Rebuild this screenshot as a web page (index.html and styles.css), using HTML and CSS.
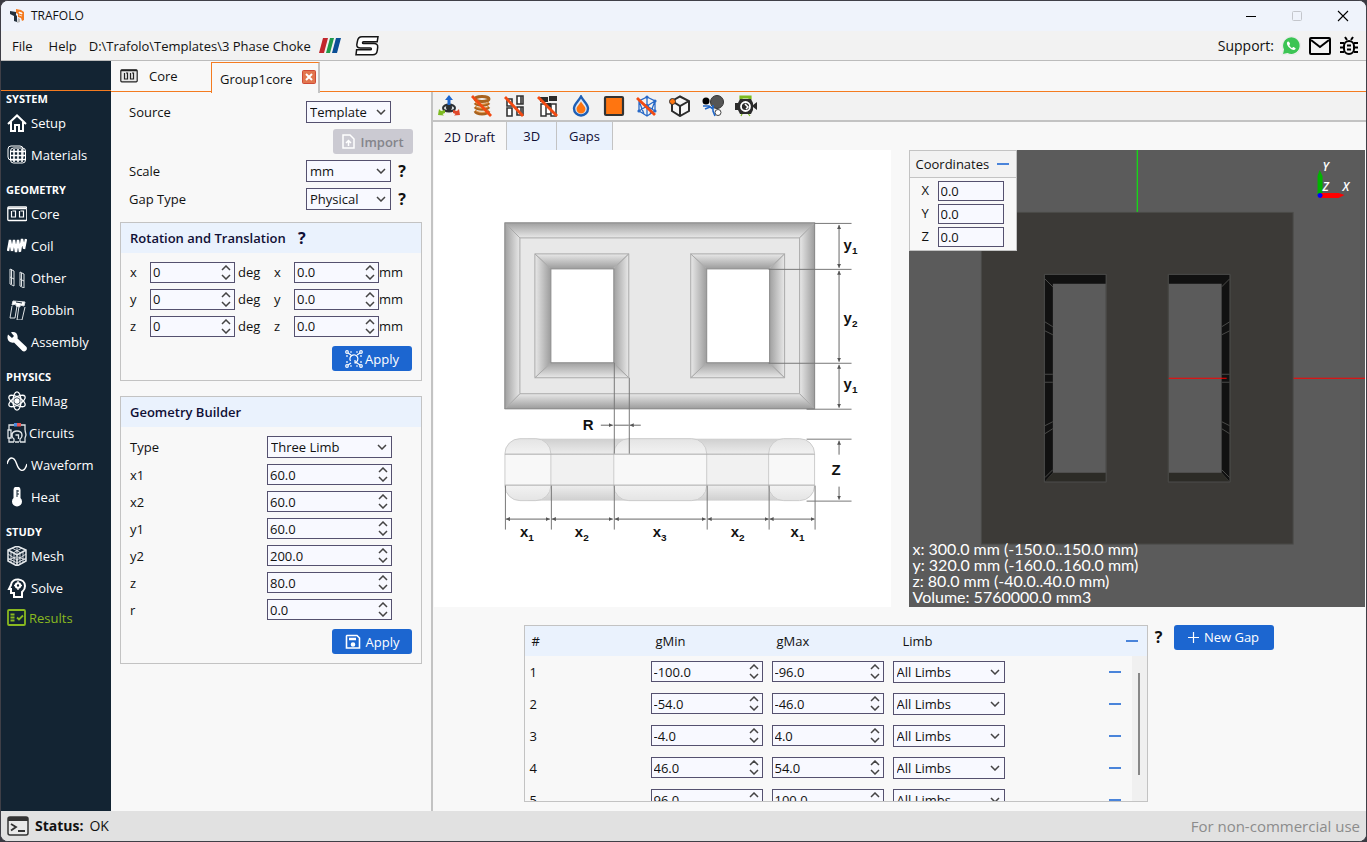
FILE: index.html
```html
<!DOCTYPE html>
<html lang="en">
<head>
    <meta charset="UTF-8">
    <meta name="viewport" content="width=device-width, initial-scale=1.0">
    <title>TRAFOLO</title>
    <link rel="stylesheet" href="styles.css">
</head>
<body>
<div class="window">
    <header class="titlebar">
        <svg class="logo" width="16" height="16" viewBox="0 0 16 16"><path d="M1 3l6 1v3l1 1v6l-3-1V8L1 6z" fill="#23303c"/><path d="M7 1l5 1 3 2v8l-2 1-1-3-3-1V6L7 5z" fill="#f47b20"/><path d="M10 4l3 1v1l-3-1zM10 7l3 1" fill="#fff" stroke="#fff" stroke-width=".7"/><path d="M9 10l2 1v3l-3 1z" fill="#bbb"/></svg>
        <span class="title">TRAFOLO</span>
        <div class="win-buttons">
            <button aria-label="Minimize"><svg width="12" height="12"><path d="M1 6.500h10" stroke="#000"/></svg></button>
            <button aria-label="Maximize" disabled><svg width="12" height="12"><rect x="1.500" y="1.500" width="9" height="9" rx="1" fill="none" stroke="#c4c6cc"/></svg></button>
            <button aria-label="Close"><svg width="12" height="12"><path d="M1 1l10 10M11 1L1 11" stroke="#000" stroke-width="1.100"/></svg></button>
        </div>
    </header>

    <nav class="menubar">
        <button class="menu">File</button>
        <button class="menu">Help</button>
        <span class="path">D:\Trafolo\Templates\3 Phase Choke</span>
        <svg class="app-icon" width="22" height="16" viewBox="0 0 22 16"><path d="M4 0h5L5 15H0z" fill="#c1272d"/><path d="M11 0h4l-4 15H7z" fill="#1f9a4a"/><path d="M17 0h5l-4 15h-5z" fill="#0b4f96"/></svg>
        <svg class="app-icon solver" width="24" height="20" viewBox="0 0 24 20"><path d="M7 .8h16l-.8 5H8.500q-1 0-1 .9t1 .9H19q4 0 3.700 3.500l-.4 3.200q-.6 4.500-4.500 4.500H1l.6-5h13.600q1.200 0 1.200-.9t-1-.9H5.500q-4 0-3.700-3.500l.6-3.200Q3 .8 7 .8z" fill="#fff" stroke="#151515" stroke-width="1.500"/></svg>
        <div class="support">
            <span>Support:</span>
            <a href="#whatsapp" aria-label="WhatsApp"><svg width="20" height="20" viewBox="0 0 20 20"><path d="M1 19l1.400-5A9 9 0 1 1 6 17.700z" fill="#fff" stroke="#ddd" stroke-width=".6"/><path d="M2 18l1-4.500A8.300 8.300 0 1 1 6.500 17z" fill="#3cc454"/><path d="M7 5.500c-2 1-1 4 1.500 6.300s5 3 6 1.200c.5-1-.3-1.200-1.500-1.800s-1.300.6-1.900.7-2.700-2-2.700-2.700.9-.9.600-1.700S7.800 5.100 7 5.500z" fill="#fff"/></svg></a>
            <a href="#mail" aria-label="Mail"><svg width="24" height="20" viewBox="0 0 24 20"><rect x="2" y="2" width="20" height="16" rx="1" fill="none" stroke="#000" stroke-width="2"/><path d="M3 4l9 7 9-7" fill="none" stroke="#000" stroke-width="2"/></svg></a>
            <a href="#bug" aria-label="Report a bug"><svg width="20" height="20" viewBox="0 0 20 20" fill="none" stroke="#000" stroke-width="2"><rect x="5" y="5" width="10" height="13" rx="5"/><path d="M8 9.500h4M8 13.500h4M6 1l2 3M14 1l-2 3M1 7h4M1 11.500h4M1 16h4M15 7h4M15 11.500h4M15 16h4"/></svg></a>
        </div>
    </nav>

    <div class="main">
        <aside class="sidebar">
            <div class="sidebar-top"></div>
            <h2>System</h2>
            <a href="#setup"><svg viewBox="0 0 20 20" fill="none" stroke="#fff" stroke-width="2"><path d="M1 11l9-8.500L19 11M4 9v9h4v-6h4v6h4V9"/></svg>Setup</a>
            <a href="#materials"><svg viewBox="0 0 20 20" fill="none" stroke="#fff"><rect x="1" y="1" width="15" height="14" rx="3"/><rect x="3.500" y="3" width="15" height="15" rx="3"/><path d="M4 6.500h14M4 10.500h14M4 14.500h14M7 4v13M11 4v13M15 4v13" stroke-width="1.600"/></svg>Materials</a>
            <h2>Geometry</h2>
            <a href="#core"><svg viewBox="0 0 20 20" fill="none" stroke="#fff"><rect x=".8" y="3" width="19" height="13.500" rx="1" stroke-width="1.300"/><path d="M1 4.500h18" stroke-width="1.500"/><path d="M4.500 7v6h4V7h-3M12.500 7v6h4V7h-3" stroke-width="1.200"/></svg>Core</a>
            <a href="#coil"><svg viewBox="0 0 20 20" fill="none" stroke="#fff" stroke-width="2.400"><path d="M1 15L3 4l2 11M5 15L7 4l2 12M9 16l2-12 2 12M13 15l2-12 2 9M17 13l2-10"/></svg>Coil</a>
            <a href="#other"><svg viewBox="0 0 20 20" fill="none" stroke="#dfe3e6"><path d="M3 1l4 2v15l-4-2zM7 11L3 9M13 4l4 2v14l-4-2zM17 13l-4-2M4.500 1v15M14.500 5v13"/></svg>Other</a>
            <a href="#bobbin"><svg viewBox="0 0 20 20" fill="none" stroke="#dfe3e6"><path d="M5 6L3 18h5l2-12M12 6l-2 14h5l3-13"/><path d="M6 1l12 1-1 4-4-1v2l-4-1V4L5 5z" fill="#fff"/><path d="M9 2l6 1" stroke="#132433"/></svg>Bobbin</a>
            <a href="#assembly"><svg viewBox="0 0 20 20" fill="#fff"><path d="M1 2.500l4 3.500 2-2L4 .5C8-1 11.500 2 10.500 6.500l9 8.500c1.500 2.500-1.500 5.500-4 4L7 10.500C3 11.500-1 8 1 2.500z"/></svg>Assembly</a>
            <h2>Physics</h2>
            <a href="#elmag"><svg viewBox="0 0 20 20" fill="none" stroke="#fff" stroke-width="1.300"><ellipse cx="10" cy="10" rx="4" ry="9.200"/><ellipse cx="10" cy="10" rx="4" ry="9.200" transform="rotate(60 10 10)"/><ellipse cx="10" cy="10" rx="4" ry="9.200" transform="rotate(120 10 10)"/><circle cx="10" cy="10" r="2" fill="#fff"/></svg>ElMag</a>
            <a href="#circuits" class="tight"><svg viewBox="0 0 20 20" fill="none" stroke="#dfe3e6" stroke-width="1.300"><path d="M7 2H2v5M13 2h5v5M1 7h3v8H1zM2 15v4h5M13 19h5v-4l1-3-1-5M7 19v-3c-3-2-3-8 3-8s6 6 3 8v3M8 19h4M8.500 12h3v4"/><rect x="7" y="0" width="3" height="3.500" fill="#4a8be0" stroke="none"/><rect x="10" y="0" width="4" height="3.500" fill="#e55353" stroke="none"/></svg>Circuits</a>
            <a href="#waveform"><svg viewBox="0 0 20 20" fill="none" stroke="#fff" stroke-width="1.400"><path d="M0 9C2 1 7 1 9.500 8.500S17 19 20 9"/></svg>Waveform</a>
            <a href="#heat"><svg viewBox="0 0 20 20"><path d="M6.500 3a3.500 3.500 0 0 1 7 0v8a5 5 0 1 1-7 0z" fill="#fff"/><path d="M10 3v7M10 4h2M10 7h2" stroke="#132433"/></svg>Heat</a>
            <h2>Study</h2>
            <a href="#mesh"><svg viewBox="0 0 20 20" fill="none" stroke="#e6e9ec" stroke-width="1.500"><path d="M10 0l9 4v11l-9 5-9-5V4zM1 4l9 5 9-5M10 9v11"/><path d="M5 2l9 5M15 2L6 7M10 0v9M4 6v11M7 8v10M1 8l9 6M1 12l9 5M1 14l8-3M13 8v10M16 6v11M19 8l-9 6M19 12l-9 5M19 14l-8-3" stroke-width=".9"/></svg>Mesh</a>
            <a href="#solve"><svg viewBox="0 0 20 20" fill="none" stroke="#fff" stroke-width="2"><path d="M7 19v-4H4v-4H2l2-4c1-8 14-7 14 1 0 4-2 5-3 6v5z"/><circle cx="11" cy="7.500" r="2.200"/><path d="M11 3v2M11 10v2M7 7.500h2M13 7.500h2" stroke-width="1.300"/></svg>Solve</a>
            <a href="#results" class="tight results"><svg viewBox="0 0 20 20" fill="none" stroke="#8ab920" stroke-width="1.800"><rect x="1" y="2" width="17" height="15" rx="1"/><path d="M3.500 6.500h4M3.500 9.500h4M3.500 12.500h4M10 9.500l2 2 4-4"/></svg>Results</a>
        </aside>

        <div class="workspace">
            <div class="doc-tabs">
                <button class="doc-tab"><svg width="18" height="14" viewBox="0 0 18 14" fill="none" stroke="#222"><rect x=".8" y=".8" width="16.400" height="12" rx="1" fill="#e8e8e8" stroke-width="1.200"/><path d="M1 1.500h16" stroke-width="1.500"/><path d="M4.500 4v6h3V4H6M10.500 4v6h3V4H12" stroke-width="1.200"/></svg>Core</button>
                <div class="doc-tab active">Group1core <button class="close-tab" aria-label="Close tab"><svg width="14" height="14"><rect x=".5" y=".5" width="13" height="13" rx="1" fill="#e2764e" stroke="#cf4a36"/><path d="M4 4l6 6M10 4l-6 6" stroke="#fff" stroke-width="2"/></svg></button></div>
            </div>

            <div class="content">
                <form class="settings">
                    <div class="row">
                        <label for="source">Source</label>
                        <select id="source"><option>Template</option></select>
                    </div>
                    <div class="import-row">
                        <button type="button" class="btn import" disabled><svg width="14" height="16" viewBox="0 0 14 16" fill="none" stroke="#fff" stroke-width="1.500"><path d="M1 1h7l4 4v9H1zM6.500 12V7M4 9l2.500-2.500L9 9"/></svg>Import</button>
                    </div>
                    <div class="row">
                        <label for="scale">Scale</label>
                        <select id="scale"><option>mm</option></select>
                        <button type="button" class="help">?</button>
                    </div>
                    <div class="row">
                        <label for="gap-type">Gap Type</label>
                        <select id="gap-type"><option>Physical</option></select>
                        <button type="button" class="help">?</button>
                    </div>

                    <section class="panel">
                        <h3>Rotation and Translation <button type="button" class="help">?</button></h3>
                        <div class="transform-grid">
                            <label for="rx">x</label><input type="number" id="rx" value="0"><span>deg</span>
                            <label for="tx">x</label><input type="number" id="tx" value="0.0"><span>mm</span>
                            <label for="ry">y</label><input type="number" id="ry" value="0"><span>deg</span>
                            <label for="ty">y</label><input type="number" id="ty" value="0.0"><span>mm</span>
                            <label for="rz">z</label><input type="number" id="rz" value="0"><span>deg</span>
                            <label for="tz">z</label><input type="number" id="tz" value="0.0"><span>mm</span>
                        </div>
                        <div class="panel-actions">
                            <button type="button" class="btn"><svg width="18" height="18" viewBox="0 0 18 18" fill="none" stroke="#fff" stroke-width="1.200"><path d="M3 3l3 2M15 3l-3 2M3 15l3-2M15 15l-3-2M5 2h2M11 2h2M5 16h2M11 16h2M2 5v2M16 5v2M2 11v2M16 11v2M5.500 11a4 4 0 1 1 5 1.500M10 10v3h3"/><circle cx="2" cy="2" r="1.300"/><circle cx="16" cy="2" r="1.300"/><circle cx="2" cy="16" r="1.300"/><circle cx="16" cy="16" r="1.300"/></svg>Apply</button>
                        </div>
                    </section>

                    <section class="panel">
                        <h3>Geometry Builder</h3>
                        <div class="builder-grid">
                            <label for="type">Type</label><select id="type"><option>Three Limb</option></select>
                            <label for="x1">x1</label><input type="number" id="x1" value="60.0">
                            <label for="x2">x2</label><input type="number" id="x2" value="60.0">
                            <label for="y1">y1</label><input type="number" id="y1" value="60.0">
                            <label for="y2">y2</label><input type="number" id="y2" value="200.0">
                            <label for="z">z</label><input type="number" id="z" value="80.0">
                            <label for="r">r</label><input type="number" id="r" value="0.0">
                        </div>
                        <div class="panel-actions">
                            <button type="button" class="btn save"><svg width="16" height="16" viewBox="0 0 16 16" fill="none" stroke="#fff" stroke-width="1.600"><path d="M2 1.500h10l2.500 2.500v10H1.500V2z"/><path d="M4 5h7" stroke-width="2.500"/><circle cx="8" cy="10.500" r="1.500" fill="#fff"/></svg>Apply</button>
                        </div>
                    </section>
                </form>

                <div class="view-pane">
                    <div class="toolbar">
                        <button aria-label="Orbit"><svg viewBox="0 0 22 22"><ellipse cx="11" cy="13" rx="7" ry="4.500" fill="#2b2f33"/><ellipse cx="11" cy="13" rx="5" ry="2" fill="#dfe3e6"/><circle cx="11" cy="12.500" r="3" fill="#2b2f33"/><path d="M11 0l4 5h-2.500v5h-3V5H7z" fill="#1f66cc"/><path d="M0 20l1-6 2 2L7 15v3l-2.500 1L6 20.500z" fill="#7dbb21"/><path d="M22 20l-1-6-2 2L15 15v3l2.500 1-1.500 1.500z" fill="#e0492b"/></svg></button>
                        <button aria-label="Toggle coils"><svg viewBox="0 0 22 22"><g fill="none" stroke="#a9631f" stroke-width="3"><ellipse cx="11" cy="4" rx="7" ry="2.500"/><path d="M4 8c2 3 12 3 14 0M4 12c2 3 12 3 14 0M4 16c2 4 12 4 14 0"/></g><path d="M4 7c2 3 12 3 14 0M4 11c2 3 12 3 14 0M4 15c2 3 12 3 14 0" fill="none" stroke="#ee9a45"/><path d="M1 1l19 20" stroke="#f24a12" stroke-width="2.800"/></svg></button>
                        <button aria-label="Toggle bars"><svg viewBox="0 0 22 22"><g fill="#fff" stroke="#333" stroke-width="1.600"><path d="M3 4h5v7H3zM3 13h5v8H3zM13 1h6v8h-6zM13 12h6v8h-6zM17 1v8M17 12v8"/></g><path d="M1 2l18 19" stroke="#f24a12" stroke-width="2.800"/></svg></button>
                        <button aria-label="Toggle bobbin"><svg viewBox="0 0 22 22"><g fill="#fff" stroke="#333" stroke-width="1.500"><path d="M4 9h5v12H4zM14 9h5v12h-5zM9 9h5v10H9z"/></g><path d="M3 2h8v5H3zM12 1h8v5h-8zM9 8h5v4H9z" fill="#2b2b2b"/><path d="M1 2l19 19" stroke="#f24a12" stroke-width="2.800"/></svg></button>
                        <button aria-label="Opacity"><svg viewBox="0 0 22 22"><path d="M11 1.500C8 7 4 9 4 13.500a7 7 0 0 0 14 0C18 9 14 7 11 1.500z" fill="#dfe8f4" stroke="#1f5fb5" stroke-width="2.400"/><path d="M11 6.500c-2 3.500-4.500 5-4.500 7.500a4.500 4.500 0 0 0 9 0c0-2.500-2.500-4-4.500-7.500z" fill="#ff7510"/></svg></button>
                        <button aria-label="Colour"><svg viewBox="0 0 22 22"><rect x="2" y="2" width="18" height="18" rx="1" fill="#ff7510" stroke="#333" stroke-width="2.200"/></svg></button>
                        <button aria-label="Toggle mesh"><svg viewBox="0 0 22 22"><path d="M11 2l8 4v10l-8 5-8-5V6zM3 6l8 5 8-5M11 2v19M3 16l8-5 8 5M3 6l5 13M19 6l-5 13" fill="none" stroke="#2869c7" stroke-width="1.300"/><g fill="#2869c7"><circle cx="11" cy="2" r="1.600"/><circle cx="19" cy="6" r="1.600"/><circle cx="19" cy="16" r="1.600"/><circle cx="3" cy="16" r="1.600"/><circle cx="11" cy="11" r="2"/></g><path d="M1 3l18 17" stroke="#f24a12" stroke-width="2.800"/></svg></button>
                        <button aria-label="Vertex"><svg viewBox="0 0 22 22"><path d="M11 1.500l9 4.500v10l-9 5-8-5V6zM3 6l8 5 9-5M11 11v10" fill="#f6f6f6" stroke="#2b2b2b" stroke-width="2"/><circle cx="3.500" cy="6.500" r="3" fill="#ff7510" stroke="#333"/></svg></button>
                        <button aria-label="Lighting"><svg viewBox="0 0 22 22"><circle cx="15" cy="7" r="6.500" fill="#555" stroke="#333"/><circle cx="4" cy="6" r="3.500" fill="#000"/><circle cx="16" cy="17.500" r="3" fill="#fff" stroke="#444"/><path d="M1 11h6l4 3M11 10v6l2 5M3 14l5-2" fill="none" stroke="#1f66c8" stroke-width="1.600"/></svg></button>
                        <button aria-label="Camera"><svg viewBox="0 0 22 22"><path d="M5 4V1h11v3h-2V3H7v1zM8 17l-2 4M12 17l3 4" fill="#7dbb21" stroke="#7dbb21" stroke-width="1.200"/><path d="M0 8h3l2-4h11l2 4v7l-2 4H5l-2-4H0zM18 10l4-3v8l-4-3z" fill="#2b2b2b"/><circle cx="10.500" cy="11.500" r="4.500" fill="none" stroke="#fff" stroke-width="1.800"/><path d="M10 9l3 3-2 2" fill="none" stroke="#fff" stroke-width="1.500"/></svg></button>
                    </div>
                    <div class="view-tabs">
                        <button class="view-tab selected">2D Draft</button>
                        <button class="view-tab">3D</button>
                        <button class="view-tab">Gaps</button>
                    </div>

                    <div class="views">
                        <svg class="draft" viewBox="0 0 457 457">
                            <defs>
                                <linearGradient id="down" x2="0" y2="1"><stop offset="0" stop-color="#a0a0a0"/><stop offset="1" stop-color="#e8e8e8"/></linearGradient>
                                <linearGradient id="up" x2="0" y2="1"><stop offset="0" stop-color="#e8e8e8"/><stop offset="1" stop-color="#9c9c9c"/></linearGradient>
                                <linearGradient id="right"><stop offset="0" stop-color="#a0a0a0"/><stop offset="1" stop-color="#e8e8e8"/></linearGradient>
                                <linearGradient id="left"><stop offset="0" stop-color="#e8e8e8"/><stop offset="1" stop-color="#9c9c9c"/></linearGradient>
                                <linearGradient id="softdown" x2="0" y2="1"><stop offset="0" stop-color="#cfcfcf"/><stop offset="1" stop-color="#ededed"/></linearGradient>
                                <linearGradient id="softup" x2="0" y2="1"><stop offset="0" stop-color="#ededed"/><stop offset="1" stop-color="#cfcfcf"/></linearGradient>
                                <linearGradient id="limb" x2="0" y2="1"><stop offset="0" stop-color="#e4e4e4"/><stop offset=".24" stop-color="#f2f2f2"/><stop offset=".25" stop-color="#f8f8f8"/><stop offset=".75" stop-color="#f8f8f8"/><stop offset=".76" stop-color="#f2f2f2"/><stop offset="1" stop-color="#e4e4e4"/></linearGradient>
                                <marker id="arrow" markerWidth="5" markerHeight="5" refX="4" refY="2" orient="auto-start-reverse"><path d="M0 0l4 2-4 2z" fill="#555"/></marker>
                                <g id="opening" stroke="#aaa">
                                    <path d="M0 0h94L78 15H16z" fill="url(#up)"/>
                                    <path d="M0 124h94L78 109H16z" fill="url(#down)"/>
                                    <path d="M0 0l16 15v94L0 124z" fill="url(#left)"/>
                                    <path d="M94 0L79 15v94l15 15z" fill="url(#right)"/>
                                    <rect x="16" y="15" width="63" height="94" fill="#fff" stroke="#888"/>
                                </g>
                            </defs>
                            <!-- front view -->
                            <rect x="71" y="73" width="310" height="186" fill="#e8e8e8"/>
                            <g stroke="#aaa">
                                <path d="M71 73h310l-15 15H86z" fill="url(#down)"/>
                                <path d="M71 259h310l-15-15H86z" fill="url(#up)"/>
                                <path d="M71 73l15 15v156l-15 15z" fill="url(#right)"/>
                                <path d="M381 73l-15 15v156l15 15z" fill="url(#left)"/>
                            </g>
                            <rect x="71" y="73" width="310" height="186" fill="none" stroke="#8a8a8a"/>
                            <use href="#opening" x="101" y="104"/>
                            <use href="#opening" x="257" y="104"/>
                            <!-- side view -->
                            <rect x="94" y="289" width="264" height="16" fill="url(#softdown)"/>
                            <rect x="94" y="305" width="264" height="31" fill="#f1f1f1"/>
                            <rect x="94" y="336" width="264" height="15" fill="url(#softup)"/>
                            <g fill="url(#limb)" stroke="#ccc">
                                <rect x="71" y="289" width="46" height="62" rx="15"/>
                                <rect x="180" y="289" width="93" height="62" rx="15"/>
                                <rect x="335" y="289" width="46" height="62" rx="15"/>
                            </g>
                            <path d="M71 304.500h310M71 335.500h310" stroke="#aaa"/>
                            <!-- dimensions -->
                            <path d="M381 73.500h37M335 119.500h83M335 213.500h83M373 259.500h45M373 289.500h45M373 351.500h45M180.500 213v91M195.500 228v76" stroke="#777" fill="none"/>
                            <path d="M71.500 336v44M117.500 336v44M180.500 336v44M273.500 336v44M335.500 336v44M381.500 336v44" stroke="#777"/>
                            <g stroke="#666">
                                <path d="M405.500 75v43" marker-start="url(#arrow)" marker-end="url(#arrow)"/>
                                <path d="M405.500 121v91" marker-start="url(#arrow)" marker-end="url(#arrow)"/>
                                <path d="M405.500 215v43" marker-start="url(#arrow)" marker-end="url(#arrow)"/>
                                <path d="M405.500 291v14" marker-start="url(#arrow)"/>
                                <path d="M405.500 337v13" marker-end="url(#arrow)"/>
                                <path d="M167 275.500h12" marker-end="url(#arrow)"/>
                                <path d="M207 275.500h-11" marker-end="url(#arrow)"/>
                                <path d="M180 275.500h15"/>
                                <path d="M72 369.500h44" marker-start="url(#arrow)" marker-end="url(#arrow)"/>
                                <path d="M118 369.500h61" marker-start="url(#arrow)" marker-end="url(#arrow)"/>
                                <path d="M181 369.500h91" marker-start="url(#arrow)" marker-end="url(#arrow)"/>
                                <path d="M274 369.500h61" marker-start="url(#arrow)" marker-end="url(#arrow)"/>
                                <path d="M336 369.500h45" marker-start="url(#arrow)" marker-end="url(#arrow)"/>
                            </g>
                            <g class="dim">
                                <text x="410" y="100">y<tspan class="sub" dy="4">1</tspan></text>
                                <text x="410" y="173">y<tspan class="sub" dy="4">2</tspan></text>
                                <text x="410" y="239">y<tspan class="sub" dy="4">1</tspan></text>
                                <text x="149" y="280">R</text>
                                <text x="398" y="325">Z</text>
                                <text x="86" y="387">x<tspan class="sub" dy="4">1</tspan></text>
                                <text x="141" y="387">x<tspan class="sub" dy="4">2</tspan></text>
                                <text x="219" y="387">x<tspan class="sub" dy="4">3</tspan></text>
                                <text x="297" y="387">x<tspan class="sub" dy="4">2</tspan></text>
                                <text x="357" y="387">x<tspan class="sub" dy="4">1</tspan></text>
                            </g>
                        </svg>

                        <div class="scene">
                            <svg viewBox="0 0 457 457">
                                <rect x="72.500" y="62.500" width="312" height="332" fill="#3c3a37" stroke="#4a4a48"/>
                                <g id="hole">
                                    <path d="M136 125h61v207h-61z" fill="#5b5b5b"/>
                                    <path d="M136 125h61v9h-53v189l-8 9z" fill="#111"/>
                                    <path d="M136 332l8-9h53v9z" fill="#2c2b26"/>
                                    <path d="M136 129l8 8M136 172l8 5M136 181l8 4M136 224.500h8M136 232.500h8M136 276l8-4M136 284l8-5M136 328l8-8" stroke="#4a4a48"/>
                                    <path d="M135.500 124.500h62v208h-62z" fill="none" stroke="#4a4a48"/>
                                </g>
                                <use href="#hole" transform="matrix(-1 0 0 1 457 0)"/>
                                <path d="M228.500 0v62" stroke="#0f0"/>
                                <path d="M260 228.500h58M385 228.500h72" stroke="#f00"/>
                                <path d="M409 45V26l2-6 3 6v19z" fill="#00b400"/>
                                <path d="M411 43h19l6 2-6 3h-19z" fill="#f00"/>
                                <circle cx="411.500" cy="45.500" r="2.500" fill="#00f"/>
                                <g class="axis"><text x="414" y="21">Y</text><text x="414" y="41">Z</text><text x="434" y="41">X</text></g>
                            </svg>
                            <div class="coords">
                                <div class="coords-head">Coordinates <button class="minus" aria-label="Collapse"></button></div>
                                <div class="coords-body">
                                    <label for="cx">X</label><input type="text" id="cx" value="0.0">
                                    <label for="cy">Y</label><input type="text" id="cy" value="0.0">
                                    <label for="cz">Z</label><input type="text" id="cz" value="0.0">
                                </div>
                            </div>
                            <div class="scene-info">
                                x: 300.0 mm (-150.0..150.0 mm)<br>
                                y: 320.0 mm (-160.0..160.0 mm)<br>
                                z: 80.0 mm (-40.0..40.0 mm)<br>
                                Volume: 5760000.0 mm3
                            </div>
                        </div>
                    </div>

                    <div class="gaps">
                        <div class="gap-table">
                            <table>
                                <thead>
                                    <tr><th class="num">#</th><th>gMin</th><th>gMax</th><th class="limb">Limb</th><th class="del"><button class="minus" aria-label="Remove all"></button></th></tr>
                                </thead>
                                <tbody>
                                    <tr><td>1</td><td><input type="number" aria-label="gMin 1" value="-100.0"></td><td><input type="number" aria-label="gMax 1" value="-96.0"></td><td><select aria-label="Limb 1"><option>All Limbs</option></select></td><td class="del"><button class="minus" aria-label="Remove 1"></button></td></tr>
                                    <tr><td>2</td><td><input type="number" aria-label="gMin 2" value="-54.0"></td><td><input type="number" aria-label="gMax 2" value="-46.0"></td><td><select aria-label="Limb 2"><option>All Limbs</option></select></td><td class="del"><button class="minus" aria-label="Remove 2"></button></td></tr>
                                    <tr><td>3</td><td><input type="number" aria-label="gMin 3" value="-4.0"></td><td><input type="number" aria-label="gMax 3" value="4.0"></td><td><select aria-label="Limb 3"><option>All Limbs</option></select></td><td class="del"><button class="minus" aria-label="Remove 3"></button></td></tr>
                                    <tr><td>4</td><td><input type="number" aria-label="gMin 4" value="46.0"></td><td><input type="number" aria-label="gMax 4" value="54.0"></td><td><select aria-label="Limb 4"><option>All Limbs</option></select></td><td class="del"><button class="minus" aria-label="Remove 4"></button></td></tr>
                                    <tr><td>5</td><td><input type="number" aria-label="gMin 5" value="96.0"></td><td><input type="number" aria-label="gMax 5" value="100.0"></td><td><select aria-label="Limb 5"><option>All Limbs</option></select></td><td class="del"><button class="minus" aria-label="Remove 5"></button></td></tr>
                                </tbody>
                            </table>
                            <div class="scrollbar"><div class="thumb"></div></div>
                        </div>
                        <button class="help">?</button>
                        <button class="btn new-gap"><svg width="11" height="11"><path d="M5.500 0v11M0 5.500h11" stroke="#fff" stroke-width="1.200"/></svg>New Gap</button>
                    </div>
                </div>
            </div>
        </div>
    </div>

    <footer class="statusbar">
        <svg width="22" height="20" viewBox="0 0 22 20"><rect x="1" y="1" width="20" height="18" rx="2" fill="#e9e9e9" stroke="#333" stroke-width="1.500"/><path d="M1 1h20v4H1z" fill="#333"/><path d="M4 8l5 3-5 3.500M11 15h7" fill="none" stroke="#333" stroke-width="1.800"/></svg>
        <b>Status:</b> <span>OK</span>
        <span class="license">For non-commercial use</span>
    </footer>
</div>
</body>
</html>
```

FILE: styles.css
```css
* {
    box-sizing: border-box;
}
body {
    margin: 0;
    background: #3a3a42;
    font-family: "Open Sans", "Noto Sans", sans-serif;
    font-size: 13px;
    line-height: 18px;
    color: #111;
}
button, input, select {
    font: inherit;
    color: inherit;
}
button {
    border: 0;
    padding: 0;
    background: none;
    cursor: pointer;
}
a {
    color: inherit;
    text-decoration: none;
}
.window {
    display: flex;
    flex-direction: column;
    height: 100vh;
    border: 1px solid #3f3f47;
    border-radius: 8px;
    overflow: hidden;
    background: #f8f8f8;
}

/* title and menu */
.titlebar {
    display: flex;
    align-items: center;
    height: 30px;
    padding-left: 8px;
    background: #eff3fb;
}
.title {
    margin-left: 6px;
    font-size: 12px;
}
.win-buttons {
    display: flex;
    margin-left: auto;
}
.win-buttons button {
    display: grid;
    place-items: center;
    width: 46px;
    height: 30px;
}
.menubar {
    display: flex;
    align-items: center;
    height: 30px;
    padding: 0 7px 0 11px;
    background: #f2f2f2;
    border-bottom: 1px solid #bcbcbc;
}
.menu {
    margin-right: 16px;
}
.path {
    margin-left: -4px;
}
.app-icon {
    margin-left: 8px;
}
.app-icon.solver {
    margin-left: 14px;
}
.support {
    display: flex;
    align-items: center;
    gap: 7px;
    margin-left: auto;
    font-size: 14px;
}
.support svg {
    display: block;
}

.main {
    display: flex;
    flex: 1;
    min-height: 0;
}

/* sidebar */
.sidebar {
    width: 110px;
    background: #132433;
    color: #fff;
}
.sidebar-top {
    height: 30px;
    border-bottom: 1px solid #f47b20;
}
.sidebar h2 {
    margin: 11px 0 0 5px;
    font-size: 11px;
    line-height: 16px;
    text-transform: uppercase;
}
.sidebar-top + h2 {
    margin-top: 0;
}
.sidebar a {
    display: flex;
    align-items: center;
    gap: 4px;
    height: 32px;
    padding-left: 6px;
}
.sidebar .tight {
    gap: 2px;
}
.sidebar svg {
    width: 20px;
    height: 20px;
}
.sidebar .results {
    height: 28px;
    color: #8ab920;
}

/* document tabs */
.workspace {
    display: flex;
    flex-direction: column;
    flex: 1;
    min-width: 0;
}
.doc-tabs {
    display: flex;
    height: 31px;
    border-bottom: 1px solid #f47b20;
}
.doc-tab {
    display: flex;
    align-items: center;
    width: 100px;
    gap: 11px;
    padding-left: 9px;
}
.doc-tab.active {
    width: 109px;
    height: 31px;
    gap: 9px;
    margin-top: 1px;
    padding-left: 8px;
    padding-top: 2px;
    border: 1px solid #f47b20;
    border-right: 2px solid #c3c3c3;
    border-bottom: 0;
    background: #f8f8f8;
}
.close-tab {
    padding-bottom: 4px;
}
.close-tab svg {
    display: block;
}
.content {
    display: flex;
    flex: 1;
    min-height: 0;
}

/* form controls */
input, select {
    min-width: 0;
    margin: 0;
    border: 1px solid #55516f;
    border-radius: 0;
    background: #f8f9ff no-repeat;
    appearance: none;
}
input {
    height: 21px;
    padding: 0 2px;
}
input[type="number"] {
    appearance: textfield;
    background-image: url("data:image/svg+xml,%3Csvg xmlns='http://www.w3.org/2000/svg' width='10' height='15' fill='none' stroke='%23444' stroke-width='1.500'%3E%3Cpath d='M1 5l4-4 4 4M1 10l4 4 4-4'/%3E%3C/svg%3E");
    background-position: right 3px center;
}
input::-webkit-inner-spin-button {
    display: none;
}
select {
    height: 22px;
    padding: 0 3px;
    background-image: url("data:image/svg+xml,%3Csvg xmlns='http://www.w3.org/2000/svg' width='10' height='6' fill='none' stroke='%23444' stroke-width='1.500'%3E%3Cpath d='M1 1l4 4 4-4'/%3E%3C/svg%3E");
    background-position: right 4px center;
}
.btn {
    display: flex;
    align-items: center;
    justify-content: center;
    gap: 2px;
    width: 80px;
    height: 25px;
    border-radius: 3px;
    background: #1c66d0;
    color: #fff;
}
.btn.save {
    gap: 5px;
}
.btn.import {
    margin-left: auto;
    gap: 4px;
    background: #cbcad2;
    color: #85858b;
    font-weight: 600;
}
.help {
    width: 22px;
    font-size: 16px;
    font-weight: bold;
    line-height: 20px;
}
.minus {
    display: block;
    width: 12px;
    height: 2px;
    background: #4a84da;
}

/* settings column */
.settings {
    width: 322px;
    padding: 9px 9px 0;
    border-right: 2px solid #c3c3c3;
}
.row {
    display: grid;
    grid-template-columns: 1fr 85px 31px;
    align-items: center;
    height: 22px;
    margin-bottom: 6px;
    padding-left: 9px;
}
.import-row {
    margin-bottom: 6px;
    padding-right: 9px;
}
.panel {
    margin-top: 12px;
    border: 1px solid #c3c3c3;
}
.panel + .panel {
    margin-top: 15px;
}
.panel h3 {
    display: flex;
    align-items: center;
    gap: 5px;
    height: 30px;
    margin: 0;
    padding-left: 9px;
    background: #eaf2fd;
    color: #100f35;
    font-size: 13px;
    font-weight: 600;
}
.transform-grid {
    display: grid;
    grid-template-columns: 20px 85px 39px 20px 85px 1fr;
    row-gap: 6px;
    align-items: center;
    padding: 9px 0 9px 9px;
    line-height: 21px;
}
.transform-grid span:nth-child(6n + 3) {
    padding-left: 3px;
}
.builder-grid {
    display: grid;
    grid-template-columns: 1fr 125px;
    row-gap: 6px;
    align-items: center;
    padding: 9px 29px 9px 9px;
}
.panel-actions {
    display: flex;
    justify-content: flex-end;
    padding: 0 9px 9px 0;
}

/* right side */
.view-pane {
    flex: 1;
    min-width: 0;
}
.toolbar {
    display: flex;
    gap: 11px;
    height: 30px;
    padding: 3px 5px;
    background: #f2f2f2;
    border-bottom: 2px solid #c3c3c3;
}
.toolbar svg {
    display: block;
    width: 22px;
    height: 22px;
}
.view-tabs {
    display: flex;
    height: 28px;
    color: #100f35;
}
.view-tab {
    height: 29px;
    padding: 0 12px;
    border: 1px solid #c3c3c3;
    border-top: 0;
    border-left: 0;
    background: #eaf2fd;
}
.view-tab.selected {
    padding: 0 11px;
    border-bottom: 0;
    background: #f8f8f8;
}
.view-tab:nth-child(2) {
    padding: 0 16px;
}
.views {
    display: grid;
    grid-template-columns: 1fr 1fr;
    gap: 18px;
    padding: 0 1px;
}
.draft, .scene svg {
    display: block;
    width: 100%;
}
.draft {
    background: #fff;
}
.dim {
    font: bold 15px "Liberation Sans", sans-serif;
    fill: #111;
}
.sub {
    font-size: 10px;
}
.scene {
    position: relative;
    background: #5b5b5b;
}
.axis {
    font-size: 12px;
    font-weight: 600;
    font-style: italic;
    fill: #fff;
}
.coords {
    position: absolute;
    left: 0;
    top: 0;
    width: 108px;
    border: 1px solid #c3c3c3;
    background: #f8f8f8;
}
.coords-head {
    display: flex;
    align-items: center;
    justify-content: space-between;
    height: 27px;
    padding: 0 7px 0 6px;
    border-bottom: 1px solid #c3c3c3;
    background: #f2f2f2;
}
.coords-body {
    display: grid;
    grid-template-columns: 16px 66px;
    row-gap: 3px;
    padding: 3px 0 3px 12px;
}
.coords-body input {
    height: 20px;
}
.scene-info {
    position: absolute;
    left: 4px;
    bottom: 2px;
    color: #fff;
    font-family: Lato, sans-serif;
    font-size: 16px;
    line-height: 16px;
}

/* gap table */
.gaps {
    display: flex;
    justify-content: center;
    align-items: flex-start;
    padding: 18px 2px 0 0;
}
.gap-table {
    position: relative;
    flex: 1;
    max-width: 624px;
    height: 177px;
    border: 1px solid #c3c3c3;
    overflow: hidden;
}
table {
    width: 100%;
    table-layout: fixed;
    border-collapse: collapse;
}
th {
    width: 121px;
    height: 30px;
    padding: 0 5px;
    background: #eaf2fd;
    font-weight: normal;
    text-align: left;
}
th.num {
    width: 126px;
    padding-left: 7px;
}
th.limb {
    padding-left: 10px;
}
td {
    height: 32px;
    padding: 0;
}
td:first-child {
    padding-left: 5px;
}
td input, td select {
    display: block;
    width: 112px;
}
th.del {
    width: auto;
    padding-right: 9px;
}
td.del {
    padding-right: 26px;
}
.del .minus {
    margin-left: auto;
}
.scrollbar {
    position: absolute;
    top: 30px;
    right: 0;
    bottom: 0;
    width: 15px;
    padding: 17px 6px 0;
    background: #f0f0f0;
}
.thumb {
    width: 2px;
    height: 102px;
    background: #888;
}
.gaps .help {
    margin-top: 2px;
    margin-right: 4px;
}
.new-gap {
    width: 100px;
    gap: 5px;
}

.statusbar {
    display: flex;
    align-items: center;
    gap: 6px;
    height: 30px;
    padding: 0 6px;
    background: #e1e1e1;
    font-size: 14px;
}
.license {
    margin-left: auto;
    color: #8c8c8c;
    font-size: 15px;
}
```
